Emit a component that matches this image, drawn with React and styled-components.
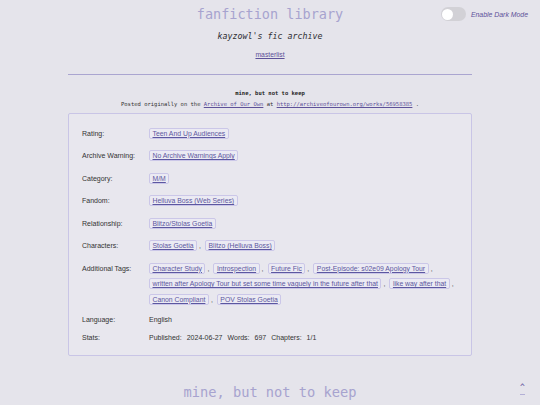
import React, { useState } from "react";
import styled, { createGlobalStyle } from "styled-components";

const GlobalStyle = createGlobalStyle`
  html, body {
    margin: 0;
    padding: 0;
    background: #e5e4eb;
  }
  body {
    font-family: "Liberation Sans", Arial, sans-serif;
    color: #333;
  }
`;

const Page = styled.div`
  width: 540px;
  min-height: 405px;
  overflow: hidden;
`;

const Header = styled.header`
  display: grid;
  grid-template-columns: 1fr auto 1fr;
  align-items: center;
  padding-top: 5px;
`;

const Title = styled.h1`
  grid-column: 2;
  margin: 0;
  font-family: "DejaVu Sans Mono", "Liberation Mono", monospace;
  font-weight: normal;
  font-size: 13.5px;
  line-height: 18px;
  color: #a7a3cf;
`;

const ModeToggle = styled.label`
  justify-self: end;
  display: flex;
  align-items: center;
  gap: 5px;
  padding-right: 12px;
  font-size: 6.9px;
  font-style: italic;
  color: #5d5199;
  cursor: pointer;
`;

const Switch = styled.span`
  position: relative;
  width: 25px;
  height: 14px;
  border-radius: 7px;
  background: ${(p) => (p.$on ? "#8d86c4" : "#d2d1d6")};
  &::after {
    content: "";
    position: absolute;
    top: 1.5px;
    left: ${(p) => (p.$on ? "12.5px" : "1.5px")};
    width: 11px;
    height: 11px;
    border-radius: 50%;
    background: #fff;
  }
`;

const Subtitle = styled.h2`
  margin: 8px 0 0;
  text-align: center;
  font-family: "DejaVu Sans Mono", "Liberation Mono", monospace;
  font-style: italic;
  font-weight: normal;
  font-size: 8.3px;
  line-height: 11px;
  color: #2e2e33;
`;

const NavLink = styled.a`
  display: block;
  margin-top: 8px;
  text-align: center;
  font-size: 6.8px;
  line-height: 9px;
  color: #5d5199;
`;

const Rule = styled.hr`
  width: 404px;
  margin: 15px auto 0;
  border: 0;
  border-top: 1px solid #aaa5d0;
`;

const Work = styled.main`
  width: 404px;
  margin: 0 auto;
`;

const WorkTitle = styled.h3`
  margin: 14px 0 0;
  text-align: center;
  font-family: "DejaVu Sans Mono", "Liberation Mono", monospace;
  font-size: 5.5px;
  line-height: 8px;
  color: #222;
`;

const Posted = styled.p`
  margin: 3px 0 0;
  text-align: center;
  font-family: "DejaVu Sans Mono", "Liberation Mono", monospace;
  font-size: 5.5px;
  line-height: 8px;
  color: #333;
  a {
    color: #5d5199;
  }
`;

const Meta = styled.dl`
  display: grid;
  grid-template-columns: 67px 1fr;
  row-gap: 7px;
  margin: 5px 0 0;
  padding: 11.5px 7px 11.5px 13px;
  background: #e8e7ee;
  border: 1px solid #c9c5e6;
  border-radius: 2px;
  font-size: 7px;
  color: #333;
`;

const Label = styled.dt`
  margin: 0;
  line-height: ${(p) => (p.$tags ? "15.5px" : "11px")};
`;

const Value = styled.dd`
  margin: 0;
  line-height: 11px;
`;

const TagList = styled.dd`
  margin: 0;
  display: flex;
  flex-wrap: wrap;
  align-items: center;
  column-gap: 4px;
`;

const TagItem = styled.span`
  display: inline-flex;
  align-items: center;
  height: 15.5px;
`;

const Tag = styled.a`
  display: inline-block;
  height: 11px;
  line-height: 10px;
  padding: 0 2.5px;
  box-sizing: border-box;
  border: 1px solid #cbc7e8;
  border-radius: 2px;
  background: #ebeaf3;
  color: #5c57a0;
  font-size: 6.85px;
  white-space: nowrap;
`;

const Comma = styled.span`
  margin-left: 2px;
  color: #555;
`;

const Stats = styled.dd`
  margin: 0;
  display: flex;
  gap: 5px;
  line-height: 11px;
`;

const Footer = styled.footer`
  display: grid;
  grid-template-columns: 1fr auto 1fr;
  align-items: end;
  margin-top: 27px;
`;

const FooterTitle = styled.p`
  grid-column: 2;
  margin: 0;
  font-family: "DejaVu Sans Mono", "Liberation Mono", monospace;
  font-size: 13.7px;
  line-height: 18px;
  color: #a7a3cf;
`;

const TopLink = styled.a`
  justify-self: end;
  margin-right: 15px;
  margin-bottom: 6px;
  display: flex;
  flex-direction: column;
  align-items: center;
  font-family: "DejaVu Sans Mono", monospace;
  font-size: 8px;
  line-height: 8px;
  color: #5d5199;
  text-decoration: none;
  &::after {
    content: "";
    width: 5px;
    height: 1px;
    margin-top: 2px;
    background: #b3afd6;
  }
`;

const rows = [
  { label: "Rating:", tags: ["Teen And Up Audiences"] },
  { label: "Archive Warning:", tags: ["No Archive Warnings Apply"] },
  { label: "Category:", tags: ["M/M"] },
  { label: "Fandom:", tags: ["Helluva Boss (Web Series)"] },
  { label: "Relationship:", tags: ["Blitzo/Stolas Goetia"] },
  { label: "Characters:", tags: ["Stolas Goetia", "Blitzo (Helluva Boss)"] },
  {
    label: "Additional Tags:",
    tags: [
      "Character Study",
      "Introspection",
      "Future Fic",
      "Post-Episode: s02e09 Apology Tour",
      "written after Apology Tour but set some time vaguely in the future after that",
      "like way after that",
      "Canon Compliant",
      "POV Stolas Goetia",
    ],
  },
];

const App = () => {
  const [dark, setDark] = useState(false);

  return (
    <Page>
      <GlobalStyle />
      <Header>
        <Title>fanfiction library</Title>
        <ModeToggle onClick={() => setDark(!dark)}>
          <Switch $on={dark} />
          Enable Dark Mode
        </ModeToggle>
      </Header>
      <Subtitle>kayzowl's fic archive</Subtitle>
      <NavLink href="#">masterlist</NavLink>
      <Rule />

      <Work>
        <WorkTitle>mine, but not to keep</WorkTitle>
        <Posted>
          Posted originally on the <a href="#">Archive of Our Own</a> at{" "}
          <a href="#">http://archiveofourown.org/works/56958385</a> .
        </Posted>

        <Meta>
          {rows.map((row) => (
            <React.Fragment key={row.label}>
              <Label $tags>{row.label}</Label>
              <TagList>
                {row.tags.map((t, i) => (
                  <TagItem key={t}>
                    <Tag href="#">{t}</Tag>
                    {i < row.tags.length - 1 && <Comma>,</Comma>}
                  </TagItem>
                ))}
              </TagList>
            </React.Fragment>
          ))}
          <Label>Language:</Label>
          <Value>English</Value>
          <Label>Stats:</Label>
          <Stats>
            <span>Published:</span>
            <span>2024-06-27</span>
            <span>Words:</span>
            <span>697</span>
            <span>Chapters:</span>
            <span>1/1</span>
          </Stats>
        </Meta>
      </Work>

      <Footer>
        <FooterTitle>mine, but not to keep</FooterTitle>
        <TopLink href="#">^</TopLink>
      </Footer>
    </Page>
  );
};

export default App;
